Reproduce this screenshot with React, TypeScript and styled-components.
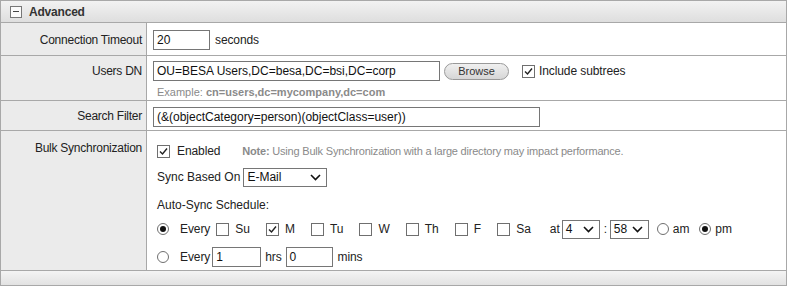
import React from 'react';
import styled, { createGlobalStyle } from 'styled-components';

const GlobalStyle = createGlobalStyle`
    html, body {
        margin: 0;
        padding: 0;
        background: #fff;
    }
    body {
        font-family: "Liberation Sans", Arial, sans-serif;
        font-size: 12px;
        color: #222;
    }
`;

const Panel = styled.div`
    width: 787px;
    height: 286px;
    box-sizing: border-box;
    border-left: 1px solid #a8a8a8;
    border-right: 1px solid #a8a8a8;
    display: flex;
    flex-direction: column;
    overflow: hidden;
`;

const Header = styled.div`
    flex: none;
    height: 23px;
    box-sizing: border-box;
    border-top: 1px solid #a8a8a8;
    border-bottom: 1px solid #a8a8a8;
    background: linear-gradient(#f2f2f2, #dedede);
    display: flex;
    align-items: center;
    padding-left: 9px;
    gap: 7px;
    font-weight: bold;
    color: #333;
    letter-spacing: -0.2px;
`;

const Toggle = styled.span`
    width: 10px;
    height: 10px;
    border: 1px solid #777;
    background: #fafafa;
    display: flex;
    align-items: center;
    justify-content: center;
    &::after {
        content: '';
        width: 6px;
        height: 1px;
        background: #444;
    }
`;

const Row = styled.div<{ $h: number }>`
    flex: none;
    display: grid;
    grid-template-columns: 146px 1fr;
    height: ${(p) => p.$h}px;
    box-sizing: border-box;
    border-bottom: 1px solid #a8a8a8;
`;

const Label = styled.div<{ $pt?: number }>`
    background: #ebebeb;
    border-right: 1px solid #a8a8a8;
    text-align: right;
    padding: ${(p) => p.$pt ?? 10}px 4px 0 0;
    color: #222;
    letter-spacing: -0.25px;
`;

const Cell = styled.div<{ $pt?: number; $pl?: number }>`
    padding: ${(p) => p.$pt ?? 6}px 0 0 ${(p) => p.$pl ?? 6}px;
    display: flex;
    flex-direction: column;
`;

const Line = styled.div<{ $mt?: number }>`
    display: flex;
    align-items: center;
    height: 22px;
    margin-top: ${(p) => p.$mt ?? 0}px;
    white-space: nowrap;
`;

const TextInput = styled.div<{ $w: number; $ml?: number }>`
    width: ${(p) => p.$w}px;
    height: 20px;
    box-sizing: border-box;
    border: 1px solid #767676;
    padding: 2px 3px;
    line-height: 15px;
    color: #111;
    background: #fff;
    margin-left: ${(p) => p.$ml ?? 0}px;
`;

const Unit = styled.span<{ $ml?: number; $mr?: number }>`
    margin-left: ${(p) => p.$ml ?? 5}px;
    margin-right: ${(p) => p.$mr ?? 0}px;
    letter-spacing: -0.1px;
`;

const Hint = styled.div`
    font-size: 11px;
    color: #8a8a8a;
    margin: 4px 0 0 4px;
    b {
        font-weight: bold;
    }
`;

const Browse = styled.span`
    margin-left: 4px;
    width: 65px;
    height: 17px;
    box-sizing: border-box;
    border: 1px solid #999;
    border-radius: 9px;
    background: linear-gradient(#f0f0f0, #d6d6d6);
    font-size: 11px;
    display: flex;
    align-items: center;
    justify-content: center;
    color: #333;
`;

const Box = styled.span<{ $ml?: number }>`
    width: 13px;
    height: 13px;
    box-sizing: border-box;
    border: 1px solid #6f6f6f;
    background: #fff;
    display: inline-flex;
    align-items: center;
    justify-content: center;
    margin-left: ${(p) => p.$ml ?? 0}px;
    flex: none;
`;

const Radio = styled.span<{ $on?: boolean; $ml?: number }>`
    width: 12px;
    height: 12px;
    box-sizing: border-box;
    border-radius: 50%;
    border: 1px solid #6f6f6f;
    background: #fff;
    display: inline-flex;
    align-items: center;
    justify-content: center;
    margin-left: ${(p) => p.$ml ?? 0}px;
    flex: none;
    &::after {
        content: '';
        width: 6px;
        height: 6px;
        border-radius: 50%;
        background: ${(p) => (p.$on ? '#111' : 'transparent')};
    }
`;

const Note = styled.span`
    font-size: 11px;
    color: #8a8a8a;
    margin-left: 22px;
    letter-spacing: -0.2px;
`;

const Select = styled.span<{ $w: number; $ml?: number }>`
    width: ${(p) => p.$w}px;
    height: 19px;
    box-sizing: border-box;
    border: 1px solid #767676;
    margin-left: ${(p) => p.$ml ?? 0}px;
    display: inline-flex;
    align-items: center;
    justify-content: space-between;
    padding: 0 5px 0 3px;
    background: #fff;
    color: #111;
`;

const Day = styled.span`
    display: inline-flex;
    align-items: center;
    gap: 6px;
    margin-right: 16px;
`;

const Footer = styled.div`
    flex: none;
    height: 15px;
    box-sizing: border-box;
    background: linear-gradient(#f4f4f4, #e2e2e2);
    border-bottom: 1px solid #a8a8a8;
`;

const Check = () => (
    <svg width="9" height="9" viewBox="0 0 9 9">
        <path d="M1 4.5 L3.5 7 L8 1.5" fill="none" stroke="#222" strokeWidth="1.4" />
    </svg>
);

const Chevron = () => (
    <svg width="11" height="7" viewBox="0 0 11 7">
        <path d="M1 1 L5.5 5.5 L10 1" fill="none" stroke="#111" strokeWidth="1.6" />
    </svg>
);

const days: [string, boolean][] = [
    ['Su', false],
    ['M', true],
    ['Tu', false],
    ['W', false],
    ['Th', false],
    ['F', false],
    ['Sa', false],
];

const App = () => {
    return (
        <>
            <GlobalStyle />
            <Panel>
                <Header>
                    <Toggle />
                    Advanced
                </Header>

                <Row $h={33}>
                    <Label>Connection Timeout</Label>
                    <Cell>
                        <Line>
                            <TextInput $w={57}>20</TextInput>
                            <Unit>seconds</Unit>
                        </Line>
                    </Cell>
                </Row>

                <Row $h={45}>
                    <Label $pt={8}>Users DN</Label>
                    <Cell $pt={4}>
                        <Line>
                            <TextInput $w={287}>OU=BESA Users,DC=besa,DC=bsi,DC=corp</TextInput>
                            <Browse>Browse</Browse>
                            <Box $ml={13}>
                                <Check />
                            </Box>
                            <Unit $ml={4}>Include subtrees</Unit>
                        </Line>
                        <Hint>
                            Example: <b>cn=users,dc=mycompany,dc=com</b>
                        </Hint>
                    </Cell>
                </Row>

                <Row $h={30}>
                    <Label $pt={8}>Search Filter</Label>
                    <Cell $pt={5}>
                        <Line>
                            <TextInput $w={387}>(&amp;(objectCategory=person)(objectClass=user))</TextInput>
                        </Line>
                    </Cell>
                </Row>

                <Row $h={140}>
                    <Label>Bulk Synchronization</Label>
                    <Cell $pt={9} $pl={10}>
                        <Line>
                            <Box>
                                <Check />
                            </Box>
                            <Unit $ml={7}>Enabled</Unit>
                            <Note>
                                <b>Note:</b> Using Bulk Synchronization with a large directory may impact performance.
                            </Note>
                        </Line>
                        <Line $mt={4}>
                            Sync Based On
                            <Select $w={84} $ml={3}>
                                E-Mail
                                <Chevron />
                            </Select>
                        </Line>
                        <Line $mt={6}>Auto-Sync Schedule:</Line>
                        <Line $mt={2}>
                            <Radio $on />
                            <Unit $ml={11} $mr={6}>
                                Every
                            </Unit>
                            {days.map(([d, on]) => (
                                <Day key={d}>
                                    <Box>{on && <Check />}</Box>
                                    {d}
                                </Day>
                            ))}
                            <Unit $ml={3}>at</Unit>
                            <Select $w={38} $ml={2}>
                                4
                                <Chevron />
                            </Select>
                            <Unit $ml={4}>:</Unit>
                            <Select $w={39} $ml={3}>
                                58
                                <Chevron />
                            </Select>
                            <Radio $ml={8} />
                            <Unit $ml={4}>am</Unit>
                            <Radio $on $ml={10} />
                            <Unit $ml={4}>pm</Unit>
                        </Line>
                        <Line $mt={6}>
                            <Radio />
                            <Unit $ml={11}>Every</Unit>
                            <TextInput $w={49} $ml={2}>
                                1
                            </TextInput>
                            <Unit $ml={4}>hrs</Unit>
                            <TextInput $w={47} $ml={4}>
                                0
                            </TextInput>
                            <Unit $ml={5}>mins</Unit>
                        </Line>
                    </Cell>
                </Row>

                <Footer />
            </Panel>
        </>
    );
};

export default App;
